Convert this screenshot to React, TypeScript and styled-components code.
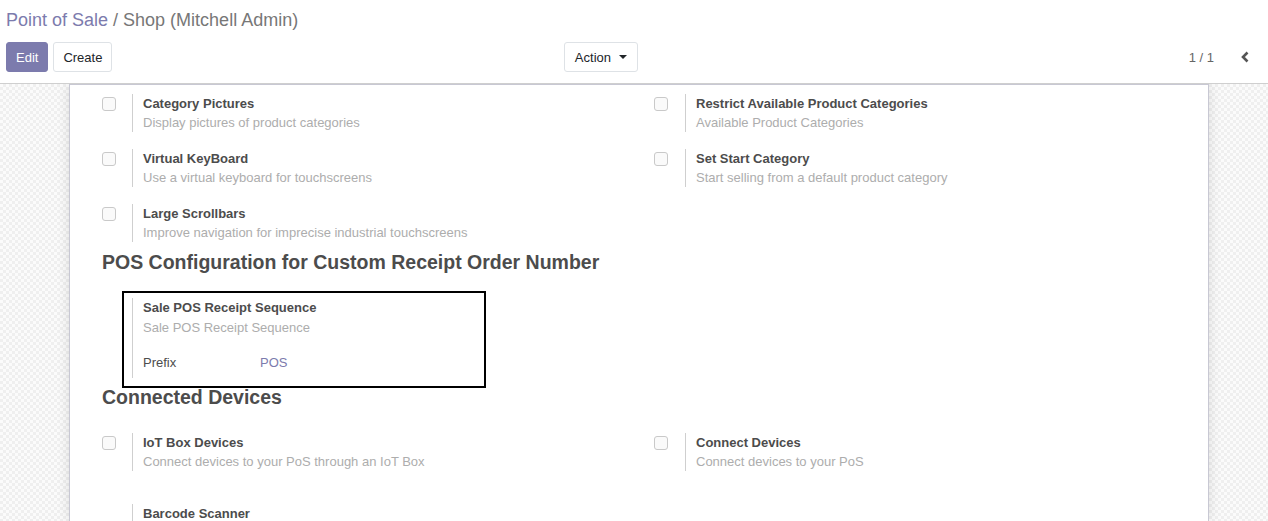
import React from "react";
import styled, { createGlobalStyle } from "styled-components";

const Global = createGlobalStyle`
  html, body { margin: 0; padding: 0; background: #fff; }
  body { font-family: "Liberation Sans", Arial, sans-serif; font-size: 13px; color: #4c4c4c; overflow: hidden; }
  * { box-sizing: border-box; }
`;

const Page = styled.div`
  width: 1268px;
  height: 521px;
  display: flex;
  flex-direction: column;
  overflow: hidden;
`;

const ControlPanel = styled.div`
  flex: none;
  height: 84px;
  padding: 8px 18px 0 6px;
  border-bottom: 1px solid #cfcfcf;
  background: #fff;
`;

const Breadcrumb = styled.div`
  font-size: 18px;
  line-height: 24px;
  color: #777;
  white-space: nowrap;
`;

const Crumb = styled.a`
  color: #7c7bad;
  text-decoration: none;
`;

const Bar = styled.div`
  margin-top: 10px;
  display: flex;
  align-items: center;
  height: 30px;
`;

const LeftSide = styled.div`
  width: 631px;
  display: flex;
  align-items: center;
  gap: 5px;
`;

const Btn = styled.button<{ $primary?: boolean }>`
  height: 30px;
  padding: 0 9px;
  font-family: inherit;
  font-size: 13px;
  border-radius: 3px;
  border: 1px solid ${(p) => (p.$primary ? "#7c7bad" : "#dee2e6")};
  background: ${(p) => (p.$primary ? "#7c7bad" : "#fff")};
  color: ${(p) => (p.$primary ? "#fff" : "#212529")};
  display: inline-flex;
  align-items: center;
  gap: 8px;
`;

const ActionBtn = styled(Btn)`
  padding: 0 10px;
  margin-right: -1px;
`;

const Caret = styled.span`
  width: 0;
  height: 0;
  border-left: 4px solid transparent;
  border-right: 4px solid transparent;
  border-top: 4px solid #212529;
`;

const Spacer = styled.div`
  flex: 1;
`;

const Pager = styled.div`
  flex: 1;
  display: flex;
  justify-content: flex-end;
  align-items: center;
  gap: 26px;
  color: #666;
  font-size: 13px;
`;

const Content = styled.div`
  flex: 1;
  padding-left: 10px;
  display: flex;
  justify-content: center;
  background-color: #f6f6f6;
  background-image: repeating-conic-gradient(#efefef 0 25%, #fbfbfb 0 50%);
  background-size: 6px 6px;
  overflow: hidden;
`;

const Sheet = styled.div`
  width: 1140px;
  background: #fff;
  border: 1px solid #c8c8d3;
  border-bottom: none;
  box-shadow: 0 0 12px rgba(0, 0, 0, 0.12);
  padding: 9px 32px 0 32px;
`;

const SettingsGrid = styled.div<{ $top?: number }>`
  display: grid;
  grid-template-columns: 552px 552px;
  row-gap: 17px;
  margin-top: ${(p) => p.$top ?? 0}px;
`;

const SettingBox = styled.div<{ $gapTop?: number }>`
  display: flex;
  margin-top: ${(p) => p.$gapTop ?? 0}px;
`;

const LeftPane = styled.div`
  width: 30px;
  flex: none;
`;

const WideLeftPane = styled(LeftPane)`
  width: 31px;
`;

const Check = styled.span`
  display: block;
  width: 14px;
  height: 14px;
  margin-top: 3px;
  border: 1px solid #c9c9c9;
  border-radius: 3px;
  background: #fafafa;
`;

const RightPane = styled.div`
  border-left: 1px solid #cfcfcf;
  padding-left: 10px;
  line-height: 19px;
  min-height: 38px;
`;

const Title = styled.div`
  font-weight: bold;
  color: #4c4c4c;
`;

const Desc = styled.div`
  color: #adadad;
`;

const Heading = styled.h2<{ $top: number }>`
  margin: ${(p) => p.$top}px 0 0 0;
  font-size: 19.5px;
  line-height: 18px;
  font-weight: bold;
  color: #4c4c4c;
`;

const Highlight = styled.div`
  margin: 20px 0 0 20px;
  width: 364px;
  border: 2px solid #000;
  padding: 5px 0 8px 8px;
`;

const BoxPane = styled(RightPane)`
  padding-bottom: 6px;
`;

const BoxDesc = styled(Desc)`
  margin-top: 1px;
`;

const FieldRow = styled.div`
  display: flex;
  margin-top: 16px;
`;

const FieldLabel = styled.span`
  width: 117px;
  color: #4c4c4c;
`;

const FieldValue = styled.span`
  color: #7c7bad;
`;

type S = { title: string; desc?: string; right?: boolean };

const Setting = ({ title, desc, right }: S) => {
  const Pane = right ? WideLeftPane : LeftPane;
  return (
    <SettingBox>
      <Pane>
        <Check />
      </Pane>
      <RightPane>
        <Title>{title}</Title>
        {desc && <Desc>{desc}</Desc>}
      </RightPane>
    </SettingBox>
  );
};

export default function App() {
  return (
    <Page>
      <Global />
      <ControlPanel>
        <Breadcrumb>
          <Crumb>Point of Sale</Crumb> / Shop (Mitchell Admin)
        </Breadcrumb>
        <Bar>
          <LeftSide>
            <Btn $primary>Edit</Btn>
            <Btn>Create</Btn>
            <Spacer />
            <ActionBtn>
              Action <Caret />
            </ActionBtn>
          </LeftSide>
          <Pager>
            <span>1 / 1</span>
            <svg width="10" height="12" viewBox="0 0 10 12">
              <polyline points="7.5,1.5 3,6 7.5,10.5" fill="none" stroke="#555" strokeWidth="2.6" />
            </svg>
          </Pager>
        </Bar>
      </ControlPanel>
      <Content>
        <Sheet>
          <SettingsGrid>
            <Setting title="Category Pictures" desc="Display pictures of product categories" />
            <Setting right title="Restrict Available Product Categories" desc="Available Product Categories" />
            <Setting title="Virtual KeyBoard" desc="Use a virtual keyboard for touchscreens" />
            <Setting right title="Set Start Category" desc="Start selling from a default product category" />
            <Setting title="Large Scrollbars" desc="Improve navigation for imprecise industrial touchscreens" />
          </SettingsGrid>
          <Heading $top={11}>POS Configuration for Custom Receipt Order Number</Heading>
          <Highlight>
            <BoxPane>
              <Title>Sale POS Receipt Sequence</Title>
              <BoxDesc>Sale POS Receipt Sequence</BoxDesc>
              <FieldRow>
                <FieldLabel>Prefix</FieldLabel>
                <FieldValue>POS</FieldValue>
              </FieldRow>
            </BoxPane>
          </Highlight>
          <Heading $top={0}>Connected Devices</Heading>
          <SettingsGrid $top={27}>
            <Setting title="IoT Box Devices" desc="Connect devices to your PoS through an IoT Box" />
            <Setting right title="Connect Devices" desc="Connect devices to your PoS" />
            <SettingBox $gapTop={16}>
              <LeftPane />
              <RightPane>
                <Title>Barcode Scanner</Title>
              </RightPane>
            </SettingBox>
          </SettingsGrid>
        </Sheet>
      </Content>
    </Page>
  );
}
